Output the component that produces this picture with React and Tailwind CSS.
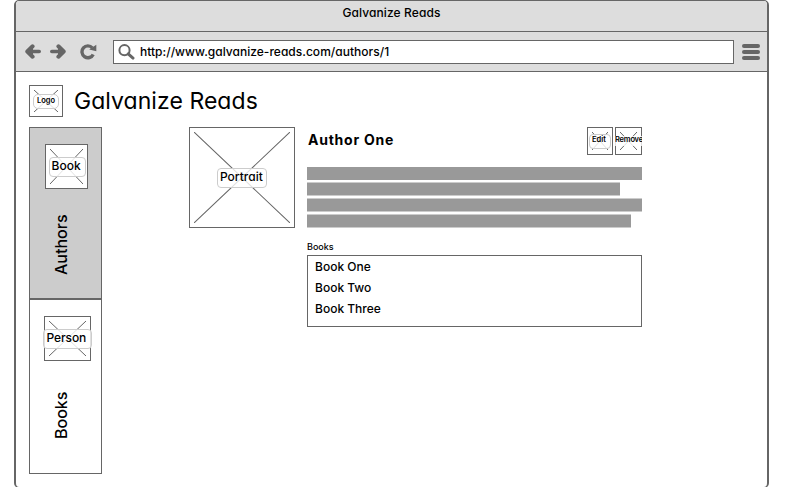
import React from "react";

function Placeholder({ label, className, labelClass, textClass }) {
  return (
    <div className={`relative shrink-0 border border-[#666] bg-white font-medium ${className}`}>
      <svg className="absolute inset-[4px] h-[calc(100%-8px)] w-[calc(100%-8px)]" viewBox="0 0 100 100" preserveAspectRatio="none">
        <path d="M0 0L100 100M100 0L0 100" stroke="#666" strokeWidth="1" vectorEffect="non-scaling-stroke" />
      </svg>
      <div className={`absolute border-[#ccc] bg-white/80 ${labelClass}`} />
      <div className={`absolute whitespace-nowrap ${textClass}`}>{label}</div>
    </div>
  );
}

function ArrowLeft({ className }) {
  return (
    <svg className={className} width="16" height="15" viewBox="0 0 16 15" fill="none" stroke="#666" strokeLinecap="round" strokeLinejoin="round">
      <path d="M7.6 2.3L2.3 7.5L7.6 12.7" strokeWidth="4" />
      <path d="M3 7.5H14.2" strokeWidth="3.6" />
      <path d="M3.5 7.5L7.5 4V11Z" fill="#666" strokeWidth="1" />
    </svg>
  );
}

function Toolbar() {
  return (
    <div className="flex h-[40px] shrink-0 border-b border-[#666] bg-[#ddd] pl-[9px] pt-[8px]">
      <ArrowLeft className="mt-[4px]" />
      <ArrowLeft className="ml-[9px] mt-[4px] rotate-180" />
      <svg className="ml-[14px] mt-[4px]" width="17" height="16" viewBox="0 0 17 16">
        <path d="M12.3 3.9A5.9 5.9 0 1 0 13.2 10.4" fill="none" stroke="#666" strokeWidth="3.4" />
        <path d="M16.3 0.8V7.2L9.2 5.4Z" fill="#666" />
      </svg>
      <div className="ml-[16px] flex h-[24px] w-[621px] border border-[#666] bg-white">
        <svg className="ml-[4px] mt-[3px] shrink-0" width="17" height="16" viewBox="0 0 17 16" fill="none" stroke="#666">
          <circle cx="6.5" cy="6.2" r="5.1" strokeWidth="2" />
          <path d="M10.2 9.9L15 14.1" strokeWidth="3" strokeLinecap="round" />
        </svg>
        <div className="ml-[5px] mt-[2px] whitespace-nowrap text-[12px] font-medium leading-[18px] tracking-[0.02px]">http://www.galvanize-reads.com/authors/1</div>
      </div>
      <div className="ml-[8px] mt-[4px] flex flex-col gap-[2px]">
        <div className="h-[4px] w-[18px] rounded-full bg-[#666]" />
        <div className="h-[4px] w-[18px] rounded-full bg-[#666]" />
        <div className="h-[4px] w-[18px] rounded-full bg-[#666]" />
      </div>
    </div>
  );
}

export default function App() {
  return (
    <div className="h-[487px] w-[788px] overflow-hidden bg-white pl-[14px] font-['Inter','Liberation_Sans',sans-serif] text-black [font-feature-settings:'cv11']">
      <div className="flex h-[488px] w-[755px] flex-col overflow-hidden rounded-[5px] border-x-2 border-y border-[#666] bg-white">
        <div className="h-[31px] shrink-0 border-b border-[#666] bg-[#ddd] pt-[3px] text-center text-[12px] font-medium leading-[18px]">
          <span className="tracking-[0.1px]">Galvanize Reads</span>
        </div>
        <Toolbar />
        <header className="flex h-[55px] shrink-0 pl-[13px] pt-[13px]">
          <Placeholder label="Logo" className="h-[32px] w-[34px]" labelClass="left-[3px] top-[8px] h-[15px] w-[26px] rounded-[5px] border" textClass="left-[7px] top-[10px] text-[7.5px] font-semibold leading-[10px]" />
          <h1 className="ml-[11px] mt-[2px] text-[23px] leading-[28px] tracking-[0.05px]">Galvanize Reads</h1>
        </header>
        <div className="flex pl-[13px]">
          <nav className="flex w-[73px] shrink-0 flex-col">
            <div className="flex h-[172px] flex-col items-center border border-[#666] bg-[#ccc] pt-[16px]">
              <Placeholder label="Book" className="mr-[-1px] h-[45px] w-[43px]" labelClass="left-[3px] top-[12px] h-[20px] w-[37px] rounded-[4px] border" textClass="left-[6px] top-[12px] text-[12px] leading-[18px]" />
              <div className="mr-[9px] mt-[23px] h-[63px] rotate-180 whitespace-nowrap text-[16px] font-medium leading-[20px] [writing-mode:vertical-rl]">Authors</div>
            </div>
            <div className="flex h-[175px] flex-col items-center border border-[#666] pt-[16px]">
              <Placeholder label="Person" className="mr-[-3px] h-[45px] w-[47px]" labelClass="left-[-2px] top-[12px] h-[20px] w-[49px] rounded-[4px] border" textClass="left-[2px] top-[12px] text-[12px] leading-[18px] tracking-[-0.1px]" />
              <div className="mr-[9px] mt-[27px] h-[51px] rotate-180 whitespace-nowrap text-[16px] font-medium leading-[20px] [writing-mode:vertical-rl]">Books</div>
            </div>
          </nav>
          <Placeholder label="Portrait" className="ml-[87px] h-[101px] w-[106px]" labelClass="left-[27px] top-[40px] h-[20px] w-[50px] rounded-[4px] border" textClass="left-[30px] top-[40px] text-[12px] leading-[18px]" />
          <main className="ml-[12px] w-[335px]">
            <div className="flex h-[40px]">
              <h2 className="ml-px mt-[3px] text-[14px] font-bold leading-[20px] tracking-[0.75px]">Author One</h2>
              <div className="ml-auto flex gap-[2px]">
                <Placeholder label="Edit" className="h-[28px] w-[26px]" labelClass="left-[1px] top-[6px] h-[15px] w-[22px] rounded-[4px] border" textClass="left-[4px] top-[7px] text-[7.5px] font-semibold leading-[10px]" />
                <div className="w-[27px] overflow-hidden">
                  <Placeholder label="Remove" className="h-[28px] w-[27px]" labelClass="left-[-1px] top-[8px] h-[10px] w-[27px]" textClass="left-[-1px] top-[7px] text-[7.5px] font-semibold leading-[10px] tracking-[-0.2px]" />
                </div>
              </div>
            </div>
            <div className="flex flex-col gap-[2px]">
              <div className="h-[13px] bg-[#999]" />
              <div className="h-[14px] w-[313px] border-y border-[#ccc] bg-[#999]" />
              <div className="h-[14px] border-y border-[#ccc] bg-[#999]" />
              <div className="h-[14px] w-[324px] border-y border-[#ccc] bg-[#999]" />
            </div>
            <div className="mt-[12px] h-[15px] text-[9px] font-medium leading-[14px]">Books</div>
            <ul className="h-[72px] border border-[#666] pl-[7px] text-[12px] font-medium leading-[21px]">
              <li>Book One</li>
              <li>Book Two</li>
              <li>Book Three</li>
            </ul>
          </main>
        </div>
      </div>
    </div>
  );
}
